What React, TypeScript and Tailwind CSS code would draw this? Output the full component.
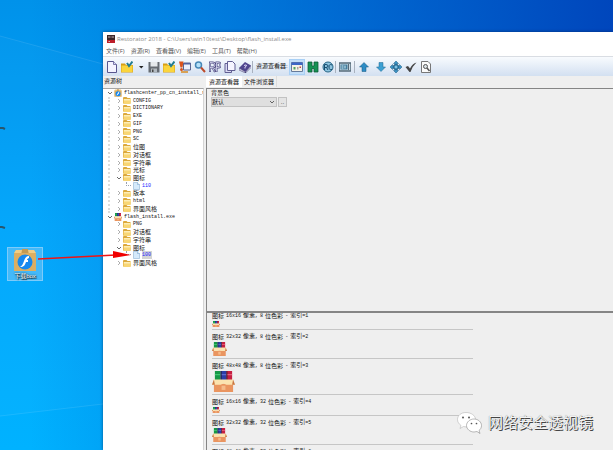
import clsx from 'clsx';
import type { ReactNode } from 'react';

type TreeRow = {
    label: string;
    depth: 0 | 1 | 2;
    open?: boolean;
    icon?: 'flash' | 'archive';
    selected?: boolean;
};

const tree: TreeRow[] = [
    { label: 'flashcenter_pp_cn_install_r', depth: 0, open: true, icon: 'flash' },
    { label: 'CONFIG', depth: 1 },
    { label: 'DICTIONARY', depth: 1 },
    { label: 'EXE', depth: 1 },
    { label: 'GIF', depth: 1 },
    { label: 'PNG', depth: 1 },
    { label: 'SC', depth: 1 },
    { label: '位图', depth: 1 },
    { label: '对话框', depth: 1 },
    { label: '字符串', depth: 1 },
    { label: '光标', depth: 1 },
    { label: '图标', depth: 1, open: true },
    { label: '110', depth: 2 },
    { label: '版本', depth: 1 },
    { label: 'html', depth: 1 },
    { label: '界面风格', depth: 1 },
    { label: 'flash_install.exe', depth: 0, open: true, icon: 'archive' },
    { label: 'PNG', depth: 1 },
    { label: '对话框', depth: 1 },
    { label: '字符串', depth: 1 },
    { label: '图标', depth: 1, open: true },
    { label: '100', depth: 2, selected: true },
    { label: '界面风格', depth: 1 },
];

const menus = ['文件(F)', '资源(R)', '查看器(V)', '编辑(E)', '工具(T)', '帮助(H)'];

const previews = [
    { size: 16, bits: 8 },
    { size: 32, bits: 8 },
    { size: 48, bits: 8 },
    { size: 16, bits: 32 },
    { size: 32, bits: 32 },
    { size: 48, bits: 32 },
];

const mono = "font-['Liberation_Mono','Noto_Sans_CJK_SC',monospace] text-[5px]";

function FlashBox({ className }: { className: string }) {
    return (
        <svg viewBox="0 0 24 24" className={className} aria-hidden="true">
            <path d="M3 2h6v2h6V2h6l2 4v17H1V6z" fill="#dcae62" />
            <path d="M3 2h6l-1 3H1zM15 2h6l2 3h-7z" fill="#f0cd86" />
            <path d="M9 1h6v4H9z" fill="#c5994f" />
            <circle cx="12" cy="14" r="7.5" fill="#1688ee" />
            <path d="M16 8c-3 0-4 2-5 5s-2 5-4 6c4 0 5-2 6-5h2v-2h-1c0-1 1-2 2-2z" fill="#fff" />
        </svg>
    );
}

function Archive({ className }: { className: string }) {
    return (
        <svg viewBox="0 0 24 20" preserveAspectRatio="none" className={className} aria-hidden="true">
            <path d="M3 0h6v9H3z" fill="#159847" />
            <path d="M9 0h6v9H9z" fill="#2b3ea8" />
            <path d="M15 0h6v9h-6z" fill="#c51f42" />
            <path d="M3 3h6v1H3z" fill="#4bd07a" />
            <path d="M9 3h6v1H9z" fill="#6573d6" />
            <path d="M15 3h6v1h-6z" fill="#ee6d83" />
            <path d="M9 0h1v9H9zM15 0h1v9h-1z" fill="#26202f" />
            <path d="M2 12h20v8H2z" fill="#ea9560" />
            <path d="M2 8h20l2 5h-9l-3-1-3 1H0z" fill="#fbe3b0" />
            <path d="M2 8l-2 5h3zM22 8l2 5h-3z" fill="#c97643" />
            <path d="M10 14h4v4h-4z" fill="#f5bb8a" />
        </svg>
    );
}

function Folder() {
    return (
        <svg viewBox="0 0 16 14" className="h-[7px] w-2 shrink-0" aria-hidden="true">
            <path d="M0 2l1-2h6l2 2h6v11H0z" fill="#dca93c" />
            <path d="M1 4h15l-1 10H1z" fill="#f8d675" />
            <path d="M2 4h13v3H2z" fill="#fdedb5" />
        </svg>
    );
}

function FileIcon() {
    return (
        <svg viewBox="0 0 14 16" className="h-2 w-[7px] shrink-0" aria-hidden="true">
            <path d="M1 1h8l4 4v10H1z" fill="#d5eafb" stroke="#7ba7cd" />
            <path d="M9 1v4h4" fill="#fff" stroke="#5b92c4" />
        </svg>
    );
}

function Chevron({ open }: { open?: boolean }) {
    return (
        <svg viewBox="0 0 8 8" className="size-1 shrink-0" aria-hidden="true">
            <path
                d={open ? 'M0 2l4 4 4-4' : 'M2 0l4 4-4 4'}
                fill="none"
                stroke={open ? '#444' : '#999'}
                strokeWidth="1.6"
            />
        </svg>
    );
}

function Tool({
    label,
    width = 'w-3',
    active,
    children,
}: {
    label: string;
    width?: string;
    active?: boolean;
    children: ReactNode;
}) {
    return (
        <button
            type="button"
            aria-label={label}
            className={clsx(
                'flex h-4 shrink-0 items-center justify-center',
                width,
                active && 'border border-[#a9d0f5] bg-[#c3def8]',
            )}
        >
            <svg viewBox="0 0 24 24" className="size-3 shrink-0">
                {children}
            </svg>
        </button>
    );
}

function Separator() {
    return <span className="h-3 w-px shrink-0 bg-[#a9b2bf]" />;
}

function Toolbar() {
    return (
        <div className="flex h-5 shrink-0 items-center border-t border-[#d9dde3] bg-linear-to-b from-[#f8fbfe] to-[#d3e0f1] pl-px">
            <Tool label="新建" width="w-[15px]">
                <path d="M3 1h12l6 6v16H3z" fill="#f4f4ff" stroke="#58568f" strokeWidth="2" />
                <path d="M15 1v6h6" fill="#d8d8f5" stroke="#58568f" strokeWidth="1.5" />
            </Tool>
            <Tool label="打开" width="w-4">
                <path d="M0 5h8l2 3h14v15H0z" fill="#d79f16" />
                <path d="M1 9h22v13H1z" fill="#fad53d" />
                <path d="M12 4l4 6 7-9" fill="none" stroke="#237d91" strokeWidth="4" />
            </Tool>
            <Tool label="最近的文件">
                <path d="M8 10h9l-4.500 5z" fill="#222" />
            </Tool>
            <Tool label="保存" width="w-[14px]">
                <path d="M1 2h22v21H1z" fill="#666c73" />
                <path d="M5 2h14v9H5z" fill="#e5e9ec" />
                <path d="M6 15h12v8H6z" fill="#b2bac1" />
                <path d="M8 17h3v5H8z" fill="#444" />
            </Tool>
            <Tool label="另存为" width="w-4">
                <path d="M0 5h8l2 3h14v15H0z" fill="#d79f16" />
                <path d="M1 9h22v13H1z" fill="#fad53d" />
                <path d="M12 4l4 6 7-9" fill="none" stroke="#237d91" strokeWidth="4" />
            </Tool>
            <Tool label="提取" width="w-[15px]">
                <path d="M9 4h14v14H9z" fill="#eef0fb" stroke="#5c6690" strokeWidth="2" />
                <path d="M9 4h14v3H9z" fill="#5362a0" />
                <path d="M0 1h9L7 13H3z" fill="#d9521d" />
                <circle cx="5" cy="17" r="3" fill="#d9521d" />
                <path d="M4 22h14" stroke="#d78b22" strokeWidth="3" />
            </Tool>
            <Tool label="查找" width="w-[15px]">
                <circle cx="9" cy="8" r="6" fill="#b4e1fa" stroke="#4688b7" strokeWidth="3" />
                <path d="M14 13l8 9" stroke="#bd4b2b" strokeWidth="4" />
            </Tool>
            <Tool label="ResPatcher" width="w-[15px]">
                <path
                    d="M2 22V3h5q5 0 5 5t-5 5H2m5 0l5 9M15 22V3h4q4 0 4 5t-4 5h-4"
                    fill="none"
                    stroke="#4b487f"
                    strokeWidth="4"
                />
                <path
                    d="M2 21V3h5q5 0 5 5t-5 5H2m5 0l4 8M15 21V3h4q4 0 4 5t-4 5h-4"
                    fill="none"
                    stroke="#e6e5fb"
                    strokeWidth="1.5"
                />
            </Tool>
            <Tool label="复制" width="w-4">
                <path d="M2 5h13v18H2z" fill="#dadaf3" stroke="#615f93" strokeWidth="2" />
                <path d="M7 1h10l5 5v13H7z" fill="#f5f5ff" stroke="#615f93" strokeWidth="2" />
            </Tool>
            <Tool label="帮助" width="w-[14px]">
                <path d="M0 14L12 2l12 7-11 13z" fill="#51478e" />
                <path d="M0 14l13 8v2L0 18zM13 22L24 9v4L13 24z" fill="#ddd9ee" stroke="#352e65" />
                <path d="M10 9q6-3 5 1l-3 2v3" fill="none" stroke="#ddd7fa" strokeWidth="2" />
            </Tool>
            <Separator />
            <span className="w-9 shrink-0 pl-[3px] text-[6px] whitespace-nowrap">资源查看器:</span>
            <Tool label="查看" width="w-4" active>
                <path d="M1 3h22v18H1z" fill="#f6f2e6" stroke="#667b9b" strokeWidth="2" />
                <path d="M1 3h22v5H1z" fill="#3d66c7" />
                <path d="M5 12h4v5H5z" fill="#51a362" />
                <path d="M12 12h3v5h-3z" fill="#a9a39c" />
                <path d="M17 11h3v3h-3z" fill="#c74545" />
            </Tool>
            <Tool label="十六进制" width="w-[15px]">
                <path d="M2 2h8v8h4V2h8v20h-8v-7h-4v7H2z" fill="#159154" stroke="#0b5934" strokeWidth="1.500" />
            </Tool>
            <Tool label="RC" width="w-[15px]">
                <circle cx="12" cy="12" r="10" fill="#8dc4e0" stroke="#266586" strokeWidth="2" />
                <path
                    d="M5 18V7h3q4 0 4 3t-4 3H5m4 0l3 5M20 8q-6-3-6 4t6 5"
                    fill="none"
                    stroke="#174d70"
                    strokeWidth="2"
                />
            </Tool>
            <Separator />
            <Tool label="预览" width="w-[18px]">
                <path d="M0 4h24v16H0z" fill="#cbdce6" stroke="#566b7a" strokeWidth="3" />
                <path d="M3 7h14v10H3z" fill="#437d9d" />
                <path d="M5 10h4M5 14h4M12 9v6" stroke="#d8f1fa" strokeWidth="2" />
                <path d="M19 6v12" stroke="#566b7a" strokeWidth="2" />
            </Tool>
            <Separator />
            <Tool label="上移" width="w-[18px]">
                <path d="M12 3l9 9h-5v9H8v-9H3z" fill="#2d8cc5" stroke="#17567f" />
            </Tool>
            <Tool label="下移" width="w-[15px]">
                <path d="M12 21l9-9h-5V3H8v9H3z" fill="#3ca0d3" stroke="#1e678f" />
            </Tool>
            <Tool label="居中" width="w-[15px]">
                <path
                    d="M12 0l5 5h-3v3h2v2h3V7l5 5-5 5v-3h-3v2h-2v3h3l-5 5-5-5h3v-3H8v-2H5v3l-5-5 5-5v3h3V8h2V5H7z"
                    fill="#3b93c5"
                    stroke="#1b5b83"
                />
                <path d="M8 8h8v8H8z" fill="#7fc3e6" stroke="#17567f" strokeWidth="2" />
            </Tool>
            <Tool label="确定" width="w-[15px]">
                <path d="M1 12l5-2 4 5Q15 5 23 3 15 10 11 22H9z" fill="#464646" />
            </Tool>
            <Tool label="打印预览" width="w-4">
                <path d="M3 1h13l5 5v17H3z" fill="#fafafa" stroke="#777" strokeWidth="2" />
                <circle cx="11" cy="11" r="4" fill="#d8e0e4" stroke="#555" strokeWidth="2" />
                <path d="M14 14l5 6" stroke="#555" strokeWidth="3" />
            </Tool>
        </div>
    );
}

function TreeItem({ row }: { row: TreeRow }) {
    const latin = /^[\x20-\x7e]+$/.test(row.label);

    return (
        <li
            className={clsx(
                'flex min-h-0 items-center gap-[2px] whitespace-nowrap',
                row.depth === 0 && 'pl-1',
                row.depth === 1 && 'pl-[13px]',
                row.depth === 2 && 'pl-[22px]',
            )}
        >
            {row.depth === 2 ? (
                <span className="mb-1 h-1 w-[5px] shrink-0 border-b border-l border-dotted border-gray-400" />
            ) : (
                <Chevron open={row.open} />
            )}
            {row.icon === 'flash' && <FlashBox className="size-2 shrink-0" />}
            {row.icon === 'archive' && <Archive className="size-2 shrink-0" />}
            {row.depth === 1 && <Folder />}
            {row.depth === 2 && <FileIcon />}
            <span
                className={clsx(
                    'leading-[8px]',
                    latin ? mono : 'text-[6px]',
                    row.depth === 2 && 'text-[#2020ff]',
                    row.selected && 'bg-[#d4d4d4] pr-px',
                )}
            >
                {row.label}
            </span>
        </li>
    );
}

function Preview({ size, bits, index }: { size: number; bits: number; index: number }) {
    return (
        <li className="border-b border-[#c6c6c6] pt-[3px] pb-[2px]">
            <p className="flex h-2 items-center gap-[2px] text-[6px] leading-[8px] whitespace-nowrap">
                <span>图标</span>
                <span className={mono}>
                    {size}x{size}
                </span>
                <span>
                    像素<span className={mono}>,</span>
                </span>
                <span className={mono}>{bits}</span>
                <span>位色彩</span>
                <span className={mono}>-</span>
                <span>
                    索引<span className={mono}>={index}</span>
                </span>
            </p>
            <Archive
                className={clsx(
                    'mt-px block',
                    size === 16 && 'h-[6px] w-2',
                    size === 32 && 'h-[14px] w-[15px]',
                    size === 48 && 'h-[21px] w-[23px]',
                )}
            />
        </li>
    );
}

function RestoratorWindow() {
    return (
        <main className="flex min-w-0 flex-1 flex-col bg-[#efefef] text-[#111] shadow-[0_0_3px_rgba(0,30,70,0.6)]">
            <header className="shrink-0 bg-white font-['Open_Sans','Noto_Sans_CJK_SC',sans-serif] text-[#8c8c8c]">
                <div className="flex h-[14px] items-center gap-[2px] pl-1">
                    <svg viewBox="0 0 16 16" className="size-2" aria-hidden="true">
                        <path d="M0 0h16v16H0z" fill="#3a2629" />
                        <path d="M0 10h16v6H0z" fill="#bd1f2a" />
                        <path d="M2 3h5v2H2zM9 3h5v2H9zM3 12h3v2H3z" fill="#c7b4b4" />
                    </svg>
                    <h1 className="text-[6px] leading-[8px] whitespace-nowrap">
                        Restorator 2018 - C:\Users\win10test\Desktop\flash_install.exe
                    </h1>
                </div>
                <nav className="flex h-[10px] items-center gap-[6px] pl-[3px] text-[6px] leading-[8px] text-[#555]">
                    {menus.map((menu) => (
                        <button key={menu} type="button" className="whitespace-nowrap">
                            {menu}
                        </button>
                    ))}
                </nav>
            </header>
            <Toolbar />
            <div className="flex min-h-0 flex-1">
                <section className="flex w-[101px] shrink-0 flex-col">
                    <h2 className="h-3 shrink-0 pl-px text-[6px] leading-[10px]">资源树</h2>
                    <div className="relative min-h-0 flex-1 overflow-hidden border-t border-r border-[#a5a5a5] border-r-[#d5d5d5] bg-white">
                        <span className="absolute top-2 left-[5px] h-[116px] border-l-2 border-dotted border-[#dcdcdc]" />
                        <ul className="relative grid h-[178px] auto-rows-fr pl-px">
                            {tree.map((row, i) => (
                                <TreeItem key={i} row={row} />
                            ))}
                        </ul>
                    </div>
                </section>
                <section className="ml-[2px] flex min-w-0 flex-1 flex-col">
                    <div role="tablist" className="flex h-3 shrink-0 items-start text-[6px]">
                        <button
                            type="button"
                            role="tab"
                            aria-selected="true"
                            className="h-[11px] bg-white px-[3px] leading-[10px]"
                        >
                            资源查看器
                        </button>
                        <button
                            type="button"
                            role="tab"
                            aria-selected="false"
                            className="h-[11px] border-r border-[#ddd] px-[2px] leading-[10px]"
                        >
                            文件浏览器
                        </button>
                    </div>
                    <div className="grid min-h-0 flex-1 grid-rows-[8fr_5fr]">
                        <div className="min-h-0 overflow-hidden border-t border-l border-[#858585] pl-1">
                            <label htmlFor="background" className="block text-[6px] leading-[8px]">
                                背景色
                            </label>
                            <div className="flex h-[10px] items-stretch gap-px">
                                <div className="relative w-[66px]">
                                    <select
                                        id="background"
                                        defaultValue="默认"
                                        className="block h-[10px] w-full appearance-none border border-[#c2c2c2] bg-[#dfdfdf] text-[6px] leading-[8px]"
                                    >
                                        <option>默认</option>
                                    </select>
                                    <span className="pointer-events-none absolute top-[3px] right-[3px] flex">
                                        <Chevron open />
                                    </span>
                                </div>
                                <button
                                    type="button"
                                    className="w-[9px] border border-[#c2c2c2] bg-[#e4e4e4] text-[6px] leading-[6px]"
                                >
                                    ..
                                </button>
                            </div>
                        </div>
                        <div className="min-h-0 overflow-hidden border-t-2 border-l border-[#858585] pl-[5px]">
                            <ul className="-mt-1 w-[65%]">
                                {previews.map((item, i) => (
                                    <Preview key={i} size={item.size} bits={item.bits} index={i + 1} />
                                ))}
                            </ul>
                        </div>
                    </div>
                </section>
            </div>
        </main>
    );
}

function Watermark() {
    return (
        <div className="absolute right-5 bottom-4 flex items-center gap-[6px]">
            <svg viewBox="0 0 50 44" className="h-[22px] w-[25px]" aria-hidden="true">
                <path
                    d="M18 1C8 1 1 7 1 15c0 5 3 9 7 12l-2 6 7-4 7 1c10 0 17-7 17-15S28 1 18 1z"
                    fill="#fff"
                    stroke="#aaa"
                />
                <path
                    d="M34 14c-8 0-15 6-15 13s7 13 15 13l6-1 6 4-2-6c3-2 5-6 5-10 0-7-7-13-15-13z"
                    fill="#fff"
                    stroke="#777"
                />
                <circle cx="12" cy="11" r="2" fill="#555" />
                <circle cx="24" cy="11" r="2" fill="#555" />
                <circle cx="29" cy="23" r="1.700" fill="#555" />
                <circle cx="39" cy="23" r="1.700" fill="#555" />
            </svg>
            <span className="text-[15px] leading-5 whitespace-nowrap text-[#f4f4f4] [text-shadow:1px_1px_0_#444,0_0_1px_#777]">
                网络安全透视镜
            </span>
        </div>
    );
}

export default function App() {
    return (
        <div className="relative flex h-screen overflow-hidden bg-[linear-gradient(to_right,transparent_5%,#0046bc_100%),linear-gradient(to_bottom,#0092ea,#00a6fb_50%,#00b2ff)] pt-8 font-['Liberation_Sans','Noto_Sans_CJK_SC',sans-serif]">
            <svg className="absolute top-0 left-0 h-[450px] w-[103px]" viewBox="0 0 103 450" aria-hidden="true">
                <path d="M0 36l103 28v340L0 416z" fill="#fff" fillOpacity="0.02" />
                <path d="M0 36l103 28M0 416l103-12" stroke="#fff" strokeOpacity="0.1" />
                <path d="M0 128h3l2 1M0 227h2l3 1" stroke="#28566e" strokeWidth="2" fill="none" />
            </svg>
            <aside className="relative w-[103px] shrink-0 pt-[215px] pl-[7px]">
                <a
                    href="#box"
                    className="flex h-[34px] w-9 flex-col items-center border border-[#7dcbfa] bg-[#5fc0f8]/70 text-[6px] leading-[8px] text-white [text-shadow:0_0_2px_#000,1px_1px_1px_#000]"
                >
                    <FlashBox className="h-6 w-6" />
                    下载box
                </a>
            </aside>
            <RestoratorWindow />
            <svg className="absolute top-[250px] left-[38px] h-[10px] w-[94px]" viewBox="0 0 94 10" aria-hidden="true">
                <path d="M0 9l78-4" stroke="#f01414" strokeWidth="1.500" />
                <path d="M75 1l18 4-18 3z" fill="#f00000" />
            </svg>
            <Watermark />
        </div>
    );
}
